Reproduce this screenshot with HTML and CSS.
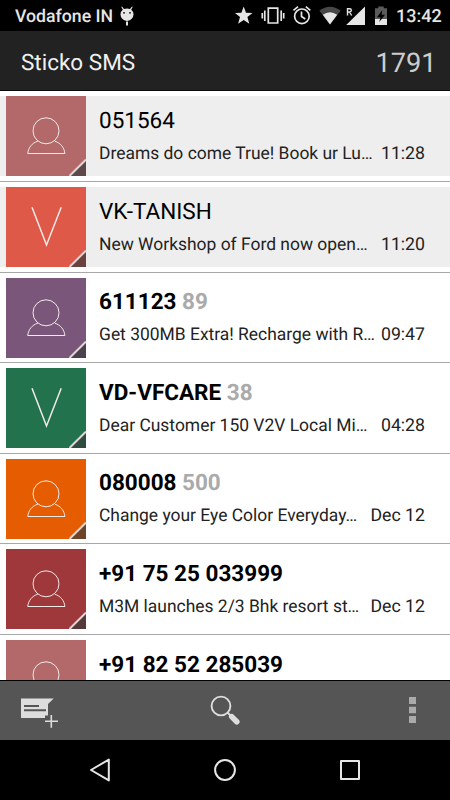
FILE: index.html
```html
<!DOCTYPE html>
<html lang="en">
<head>
<meta charset="utf-8">
<title>Sticko SMS</title>
<link rel="stylesheet" href="styles.css">
</head>
<body>
<svg width="0" height="0" class="defs">
  <symbol id="person" viewBox="0 0 80 80">
    <circle cx="40" cy="34.8" r="13"/>
    <path d="M31.8 45.2C26 47 22.4 51.500 21.700 57.500H58.900C58.200 51.500 54.600 47 48.800 45.200"/>
  </symbol>
  <symbol id="letter-v" viewBox="0 0 80 80"><path class="v" d="M26 20.300L40.500 58L55.200 20.300"/></symbol>
  <symbol id="corner" viewBox="0 0 17 17">
    <path class="shade" d="M17 1V17H1Z"/><path class="edge" d="M0.500 17L17 0.500"/>
  </symbol>
</svg>
<div class="screen">
  <div class="status">
    <span class="carrier">Vodafone IN</span>
    <svg class="bug" width="14" height="20" viewBox="0 0 14 20"><path fill="#e6e6e6" d="M2 .5L4 3.100Q7 1.700 10 3.100L12 .5L12.700 1L11.200 3.800Q13.500 5.500 13.500 8.500Q13.300 13.800 7 15Q.7 13.800 .5 8.500Q.5 5.500 2.800 3.800L1.300 1ZM6 15.500H8V19.500H6Z"/><circle cx="4" cy="6.800" r=".9"/><circle cx="10" cy="6.800" r=".9"/></svg>
    <svg class="tray" width="155" height="31" viewBox="235 0 155 31" fill="#e6e6e6">
      <path d="M243.700 6.500L246 12.700L252.500 12.900L247.400 17L249.300 23.800L243.700 20L238.100 23.800L240 17L234.900 12.900L241.400 12.700Z"/>
      <path fill="none" stroke="#e6e6e6" stroke-width="1.700" d="M268.300 8.200H277.700V23H268.300ZM264.800 10.500V21M281.200 10.500V21M262.300 13V18.500M283.700 13V18.500"/>
      <g fill="none" stroke="#e6e6e6" stroke-width="1.700"><circle cx="301.900" cy="16.300" r="7.300"/><path d="M301.500 11.500V16.500L305.300 19M293.500 10.300L298 6.700M310.300 10.300L305.800 6.700"/></g>
      <path fill="#474747" d="M319.300 10.600Q330 3 340.700 10.600L330 24.600Z"/>
      <path d="M322.800 14.800Q330 9.700 337.200 14.800L330 24.600Z"/>
      <path d="M365 6.500V25H346.200Z"/>
      <path fill="none" stroke="#e6e6e6" stroke-width="1.400" d="M347.500 15.500V8.800H349.700Q351.300 8.800 351.300 10.300Q351.300 12 349.700 12H347.500M349.500 12L351.700 15.500"/>
      <path fill="#5a5a5a" d="M375 8.300H378.300V6.500H383.700V8.300H387V25H375Z"/>
      <path d="M375 19H387V25H375Z"/><path fill="#000" d="M382.300 10L377 17.200H380.500L379.300 22L385 14.700H381.600Z"/>
    </svg>
    <span class="clock">13:42</span>
  </div>
  <div class="header"><span class="title">Sticko SMS</span><span class="total">1791</span></div>
  <div class="list">
    <div class="row read"><div class="card">
      <div class="tile rose"><svg class="face"><use href="#person"/></svg><svg class="fold"><use href="#corner"/></svg></div>
      <div class="body"><div class="name">051564</div><div class="line"><span>Dreams do come True! Book ur Lu…</span><span class="time">11:28</span></div></div>
    </div></div>
    <div class="row read"><div class="card">
      <div class="tile red"><svg class="face"><use href="#letter-v"/></svg><svg class="fold"><use href="#corner"/></svg></div>
      <div class="body"><div class="name">VK-TANISH</div><div class="line"><span>New Workshop of Ford now open…</span><span class="time">11:20</span></div></div>
    </div></div>
    <div class="row"><div class="card">
      <div class="tile purple"><svg class="face"><use href="#person"/></svg><svg class="fold"><use href="#corner"/></svg></div>
      <div class="body"><div class="name">611123 <span class="count">89</span></div><div class="line"><span>Get 300MB Extra! Recharge with R…</span><span class="time">09:47</span></div></div>
    </div></div>
    <div class="row"><div class="card">
      <div class="tile green"><svg class="face"><use href="#letter-v"/></svg><svg class="fold"><use href="#corner"/></svg></div>
      <div class="body"><div class="name">VD-VFCARE <span class="count">38</span></div><div class="line"><span>Dear Customer 150 V2V Local Mi…</span><span class="time">04:28</span></div></div>
    </div></div>
    <div class="row"><div class="card">
      <div class="tile orange"><svg class="face"><use href="#person"/></svg><svg class="fold"><use href="#corner"/></svg></div>
      <div class="body"><div class="name">080008 <span class="count">500</span></div><div class="line"><span>Change your Eye Color Everyday…</span><span class="time">Dec 12</span></div></div>
    </div></div>
    <div class="row"><div class="card">
      <div class="tile brick"><svg class="face"><use href="#person"/></svg><svg class="fold"><use href="#corner"/></svg></div>
      <div class="body"><div class="name">+91 75 25 033999</div><div class="line"><span>M3M launches 2/3 Bhk resort st…</span><span class="time">Dec 12</span></div></div>
    </div></div>
    <div class="row"><div class="card">
      <div class="tile rose"><svg class="face"><use href="#person"/></svg></div>
      <div class="body"><div class="name">+91 82 52 285039</div></div>
    </div></div>
  </div>
  <div class="toolbar">
    <svg width="450" height="59" viewBox="0 681 450 59">
      <path fill="#ddd" d="M21 698.500H53.700L48 704V715.500H45V718H21Z"/>
      <path fill="none" stroke="#555" stroke-width="2" d="M24 706H39M24 710.300H46"/>
      <path fill="none" stroke="#ddd" stroke-width="1.600" d="M45 721.200H58M51.300 715V727.700"/>
      <circle cx="221" cy="706" r="9.400" fill="none" stroke="#ddd" stroke-width="1.900"/>
      <path stroke="#ddd" stroke-width="2" d="M227.500 712.500L230.500 715.500"/>
      <path stroke="#ddd" stroke-width="5.600" stroke-linecap="round" d="M231.700 716.600L236.800 721.800"/>
      <path fill="#aaa" d="M409 697H416V704H409ZM409 706.700H416V713.300H409ZM409 716H416V723H409Z"/>
    </svg>
  </div>
  <div class="nav">
    <svg width="450" height="60" viewBox="0 740 450 60" fill="none" stroke="#e6e6e6" stroke-width="2" stroke-linejoin="round">
      <path d="M108.800 759.600V780.400L91 770Z"/><circle cx="225" cy="770" r="9.900"/><path d="M341 761H359V779H341Z"/>
    </svg>
  </div>
</div>
</body>
</html>
```
FILE: styles.css
```css
* { box-sizing: border-box; }
body { margin: 0; background: #000; font-family: Roboto, "Liberation Sans", sans-serif; text-rendering: geometricPrecision; }
.defs { position: absolute; }
svg { display: block; flex: none; }
.screen { width: 450px; height: 800px; display: flex; flex-direction: column; overflow: hidden; background: #fff; }
.status { height: 31px; flex: none; display: flex; background: #000; color: #e6e6e6; font-weight: 500; font-size: 18px; line-height: 34px; white-space: nowrap; }
.carrier { width: 106px; padding-left: 15px; font-size: 17.700px; }
.bug { margin: 6px 0 0 14px; }
.tray { margin-left: 101px; }
.clock { padding-left: 6px; }
.header { height: 60.4px; flex: none; display: flex; justify-content: space-between; padding: 0 13.500px 0 21px; background: #222; border-bottom: 1px solid #0a0a0a; line-height: 64px; color: #f0f0f0; }
.title { font-size: 22.500px; }
.total { font-size: 27.200px; color: #ccc; }
.list { height: 588.6px; flex: none; overflow: hidden; }
.row { height: 90.6px; padding-top: 5px; border-bottom: 1px solid #a8a8a8; }
.card { height: 80px; padding-left: 6px; display: flex; }
.read .card { background: #eee; }
.tile { width: 80px; height: 80px; display: grid; flex: none; }
.tile > svg { grid-area: 1 / 1; }
.face { width: 80px; height: 80px; fill: none; stroke: #f3e9e9; stroke-width: 1; }
.v { stroke-width: 1.500; }
.fold { width: 17px; height: 17px; align-self: end; justify-self: end; }
.shade { fill: #333a3a; fill-opacity: .68; stroke: none; }
.edge { stroke: #e2d5d5; stroke-width: 2; }
.rose { background: #b36969; }
.red { background: #de5948; }
.purple { background: #7a567a; }
.green { background: #22734d; }
.orange { background: #e65c00; }
.brick { background: #9e383a; }
.body { flex: 1; padding: 10.600px 25px 0 13px; white-space: nowrap; color: #000; }
.name { font-size: 22.500px; line-height: 28px; font-weight: 700; }
.read .name { font-weight: 400; }
.count { color: #aaa; }
.line { display: flex; justify-content: space-between; margin-top: 7px; font-size: 17.450px; line-height: 24px; color: #222; }
.time { font-size: 17.700px; }
.toolbar { height: 60px; flex: none; background: #555; border-top: 1px solid #000; }
.nav { height: 60px; flex: none; background: #000; }
```
